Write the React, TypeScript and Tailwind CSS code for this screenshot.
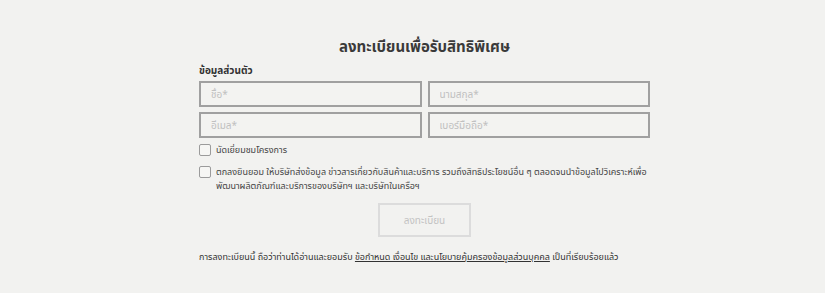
const fieldCls =
  "h-[26px] w-full border-2 border-[#a0a0a0] bg-[#f3f3f1] px-[10px] text-[10px] text-[#555] placeholder:text-[#c0c0c0] outline-none";

const App = () => {
  return (
    <div
      className="min-h-[293px] w-full bg-[#f2f2f0] text-[#333]"
      style={{ fontFamily: '"Noto Sans", "Noto Sans Thai", sans-serif' }}
    >
      <div className="ml-[199px] w-[451px] pt-[35px]">
        {/* Title */}
        <h1 className="text-center text-[15px] font-bold leading-[22px] text-[#3a3a3a]">
          ลงทะเบียนเพื่อรับสิทธิพิเศษ
        </h1>

        <div className="mt-[6px] text-[10px] font-bold leading-[14px] text-[#333]">ข้อมูลส่วนตัว</div>

        {/* Inputs */}
        <div className="mt-[4px] grid grid-cols-2 gap-x-[6px] gap-y-[5px]">
          <input className={fieldCls} placeholder="ชื่อ*" />
          <input className={fieldCls} placeholder="นามสกุล*" />
          <input className={fieldCls} placeholder="อีเมล*" />
          <input className={fieldCls} placeholder="เบอร์มือถือ*" />
        </div>

        {/* Checkboxes */}
        <label className="mt-[5px] flex items-center gap-[5px]">
          <span className="h-[12px] w-[12px] shrink-0 rounded-[2px] border border-[#9b9b9b] bg-[#f6f6f4]" />
          <span className="text-[9px] leading-[14px] text-[#444]">นัดเยี่ยมชมโครงการ</span>
        </label>

        <label className="mt-[8px] flex items-start gap-[5px]">
          <span className="mt-[1px] h-[12px] w-[12px] shrink-0 rounded-[2px] border border-[#9b9b9b] bg-[#f6f6f4]" />
          <span className="text-[9px] leading-[14px] text-[#444]">
            ตกลงยินยอม ให้บริษัทส่งข้อมูล ข่าวสารเกี่ยวกับสินค้าและบริการ รวมถึงสิทธิประโยชน์อื่น ๆ ตลอดจนนำข้อมูลไปวิเคราะห์เพื่อ
            พัฒนาผลิตภัณฑ์และบริการของบริษัทฯ และบริษัทในเครือฯ
          </span>
        </label>

        {/* Submit */}
        <div className="mt-[10px] flex justify-center">
          <button className="h-[34px] w-[93px] border-2 border-[#dcdcdc] text-[10px] text-[#c3c3c3]">
            ลงทะเบียน
          </button>
        </div>

        <p className="mt-[13px] whitespace-nowrap text-[9px] leading-[14px] text-[#333]">
          การลงทะเบียนนี้ ถือว่าท่านได้อ่านและยอมรับ{" "}
          <span className="underline">ข้อกำหนด เงื่อนไข และนโยบายคุ้มครองข้อมูลส่วนบุคคล</span> เป็นที่เรียบร้อยแล้ว
        </p>
      </div>
    </div>
  );
};

export default App;
